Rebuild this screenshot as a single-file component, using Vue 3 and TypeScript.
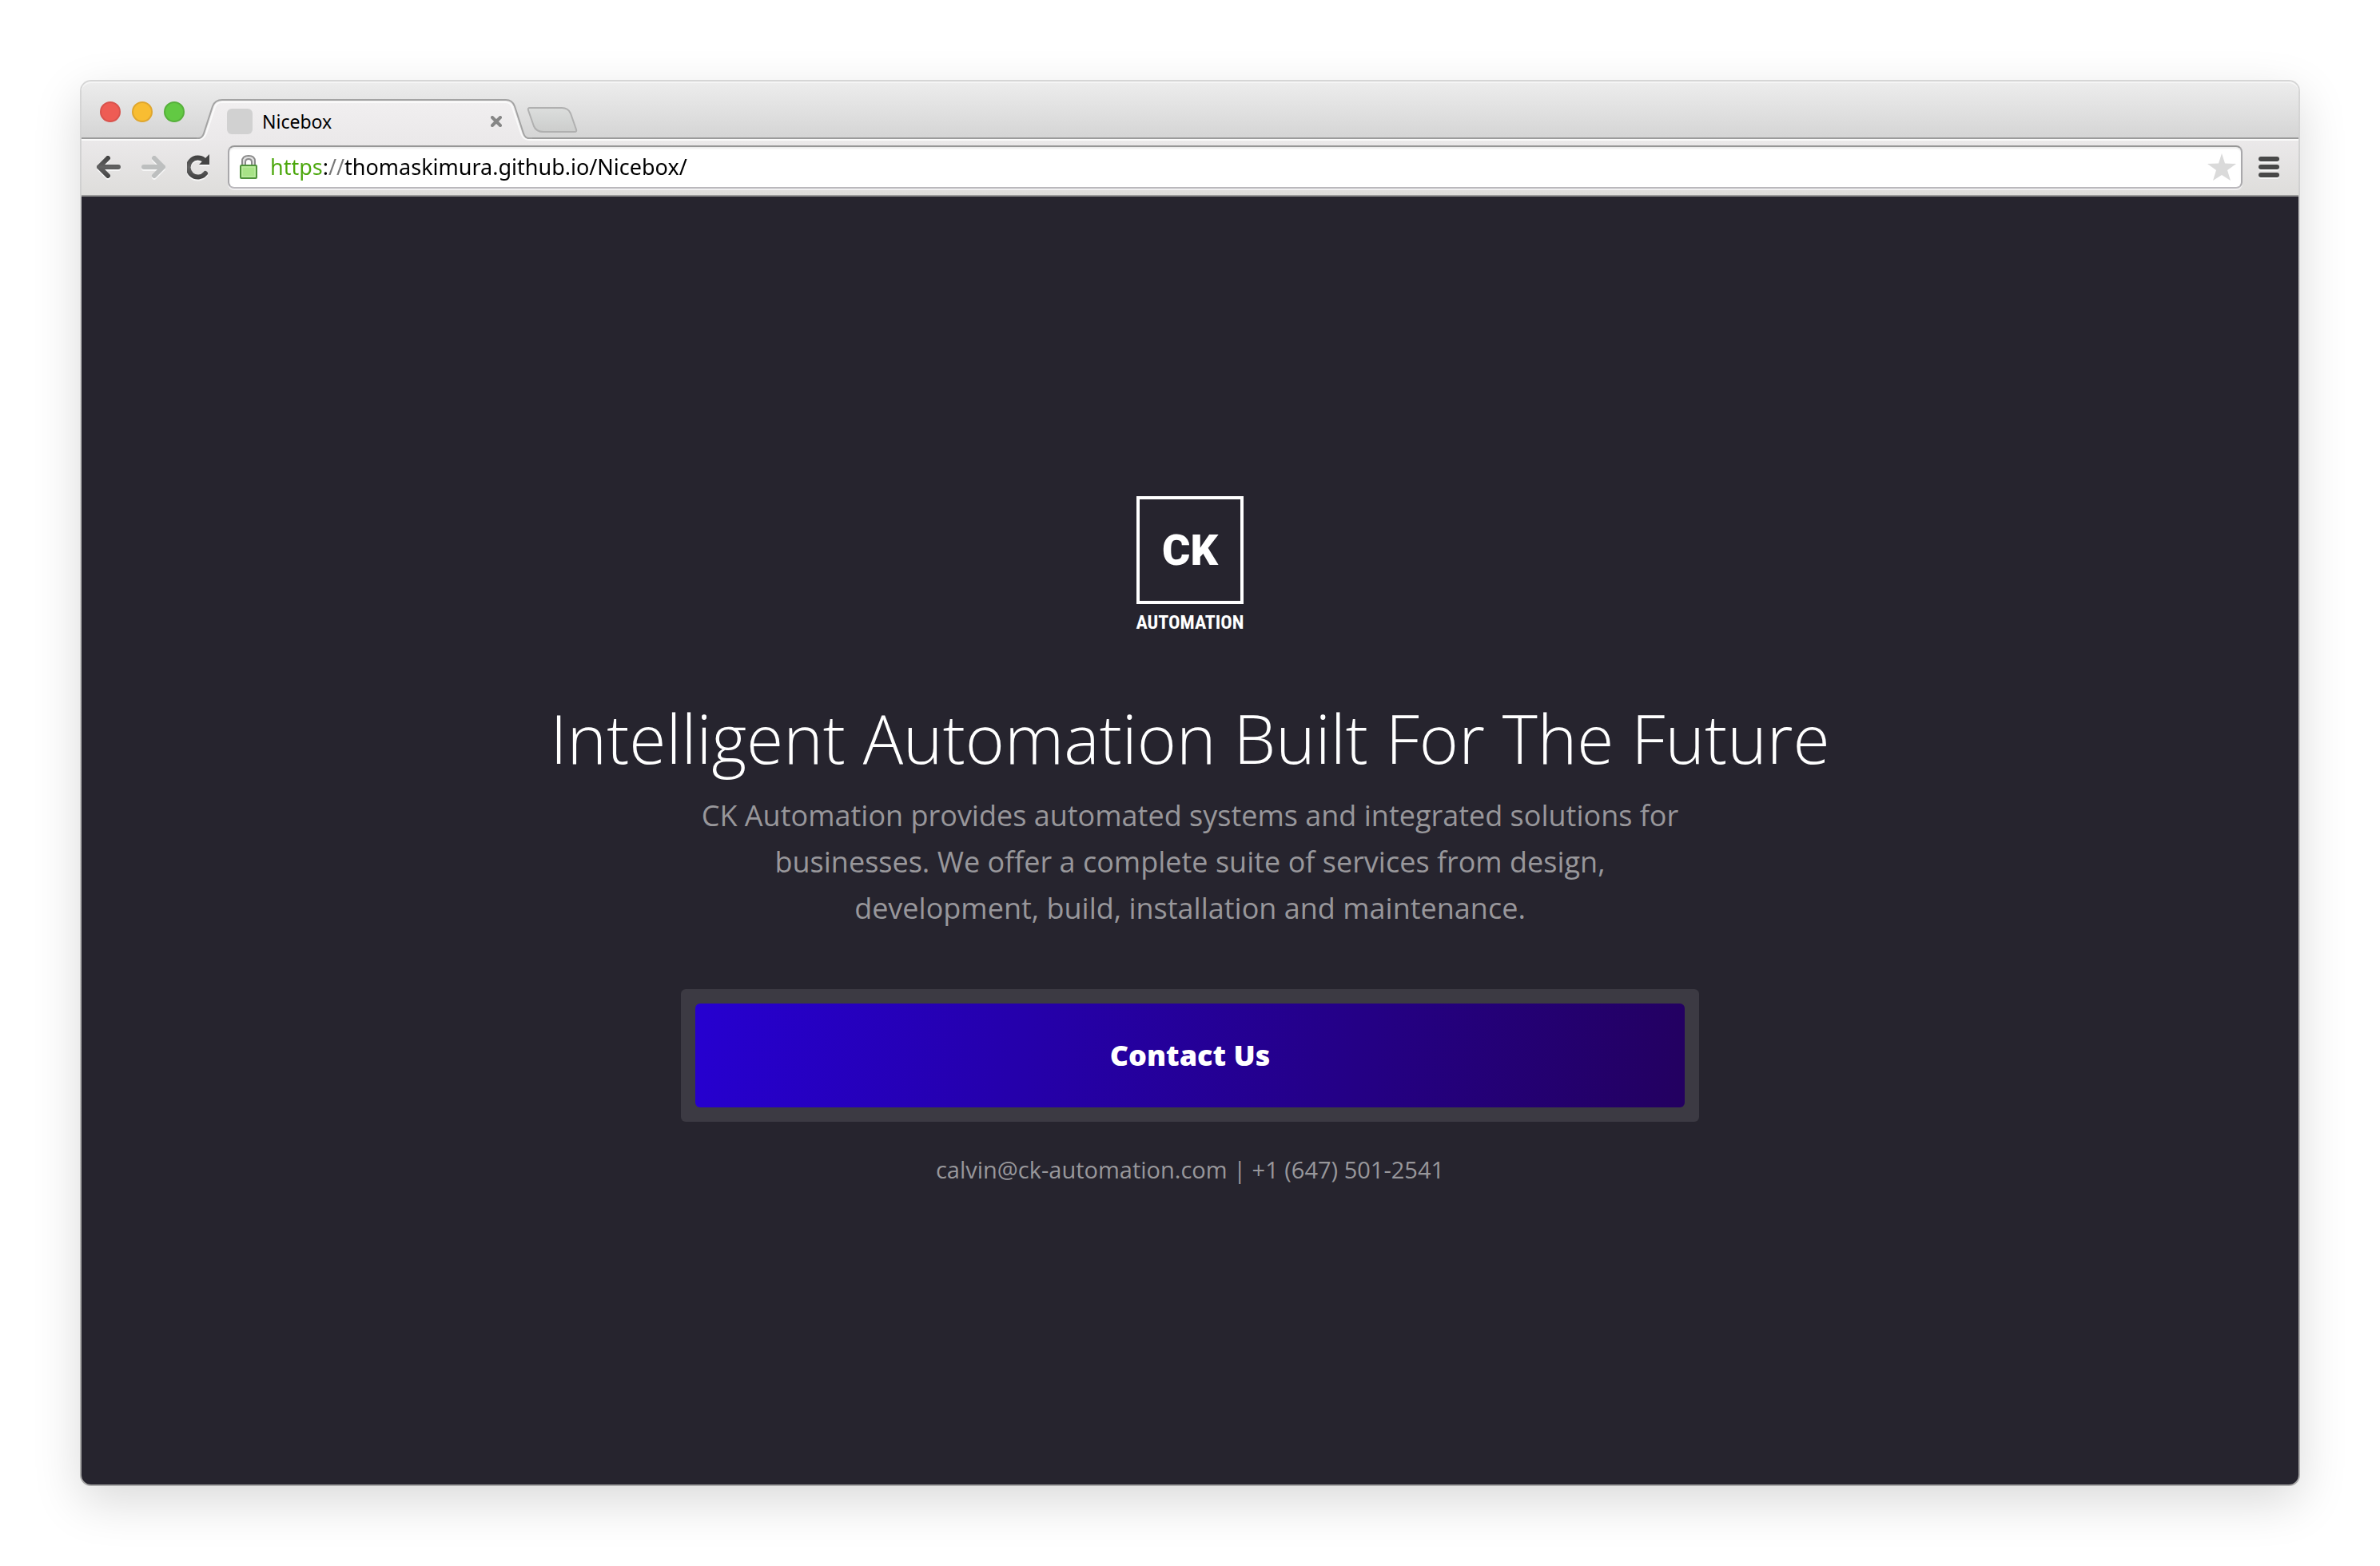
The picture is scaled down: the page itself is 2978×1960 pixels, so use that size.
<script setup lang="ts">
import { ref } from 'vue'

const address = ref<string>('https://thomaskimura.github.io/Nicebox/')
const lights: string[] = ['close', 'minimise', 'zoom']
</script>

<template>
  <div class="desktop">
    <div class="window">
      <header class="tabstrip">
        <div class="lights">
          <button v-for="l in lights" :key="l" type="button" :class="['light', l]" :aria-label="l"></button>
        </div>
        <div class="tab">
          <svg class="tab-shape" viewBox="0 0 420 52" aria-hidden="true">
            <defs>
              <linearGradient id="tabFill" x1="0" y1="0" x2="0" y2="1">
                <stop offset="0" stop-color="#f1eff0" />
                <stop offset="1" stop-color="#ebe9ea" />
              </linearGradient>
            </defs>
            <path d="M0 52V50H3Q8 49 10 43L21 10Q24 2 32 2H387Q394 2 397 9L408 43Q410 50 416 50H420V52Z" fill="url(#tabFill)" />
            <path d="M0 51H3Q9 50 12 43L23 10Q25 4 32 4H386Q393 4 395 10L406 43Q409 51 416 51H420" fill="none" stroke="#fafafa" stroke-width="2" />
            <path d="M0 49H2Q7 49 9 43L20 9Q23 1 32 1H387Q395 1 398 9L409 43Q411 49 416 49H420" fill="none" stroke="#a3a3a3" stroke-width="2" />
          </svg>
          <span class="favicon"></span>
          <span class="tab-title">Nicebox</span>
          <button class="tab-close" type="button" aria-label="Close tab">
            <svg width="14" height="14" viewBox="0 0 14 14"><path d="M2 2L12 12M12 2L2 12" stroke="#868686" stroke-width="4" stroke-linecap="round" /></svg>
          </button>
        </div>
        <button class="new-tab" type="button" aria-label="New tab">
          <svg width="66" height="36" viewBox="0 0 66 36">
            <defs>
              <linearGradient id="newFill" x1="0" y1="0" x2="0" y2="1">
                <stop offset="0" stop-color="#dcdedd" />
                <stop offset="1" stop-color="#cccdcc" />
              </linearGradient>
            </defs>
            <path d="M5 1H45Q53 1 56 8L63 28Q64 31 61 31H22Q13 31 10 24L3 4Q2 1 5 1Z" fill="url(#newFill)" stroke="#b0b0b0" stroke-width="2" />
          </svg>
        </button>
      </header>

      <nav class="toolbar" aria-label="Browser">
        <svg class="defs" width="0" height="0" aria-hidden="true">
          <defs>
            <linearGradient id="ink" x1="0" y1="0" x2="0" y2="32" gradientUnits="userSpaceOnUse">
              <stop offset="0" stop-color="#3a3a3a" />
              <stop offset="0.5" stop-color="#626262" />
              <stop offset="1" stop-color="#3e3e3e" />
            </linearGradient>
          </defs>
        </svg>
        <div class="nav-buttons">
          <button type="button" aria-label="Back">
            <svg width="34" height="32" viewBox="0 0 34 32"><path d="M17 5L6 16L17 27M6 16H30" fill="none" stroke="url(#ink)" stroke-width="6" stroke-linecap="round" stroke-linejoin="round" /></svg>
          </button>
          <button type="button" aria-label="Forward">
            <svg width="34" height="32" viewBox="0 0 34 32"><path d="M17 5L28 16L17 27M28 16H4" fill="none" stroke="#bdbfbf" stroke-width="6" stroke-linecap="round" stroke-linejoin="round" /></svg>
          </button>
          <button type="button" aria-label="Reload">
            <svg width="34" height="32" viewBox="0 0 34 32"><path d="M23 24A12 12 0 1 1 22 8" fill="none" stroke="url(#ink)" stroke-width="6" stroke-linecap="round" /><path d="M28 0V13H15Z" fill="#444" /></svg>
          </button>
        </div>
        <div class="omnibox">
          <svg class="lock" width="24" height="32" viewBox="0 0 24 32" aria-hidden="true">
            <path d="M4 14V9Q4 2 12 2Q20 2 20 9V14" fill="none" stroke="#8a8a8a" stroke-width="2" />
            <path d="M6 14V9Q6 4 12 4Q18 4 18 9V14" fill="none" stroke="#dedede" stroke-width="2" />
            <path d="M8 14V10Q8 6 12 6Q16 6 16 10V14" fill="none" stroke="#8a8a8a" stroke-width="2" />
            <rect x="2" y="14" width="20" height="16" rx="1" fill="#a8e387" stroke="#4f933b" stroke-width="2" />
            <rect x="4" y="16" width="16" height="12" fill="none" stroke="#c3efaa" stroke-width="1" />
          </svg>
          <input v-model="address" class="url" type="text" aria-label="Address" spellcheck="false" />
          <button class="star" type="button" aria-label="Bookmark">
            <svg width="36" height="34" viewBox="0 0 36 34"><path d="M18 0L22 12.500L36 13L25 21L29 34L18 27L7 34L11 21L0 13L14 12.500Z" fill="#dadada" /></svg>
          </button>
        </div>
        <button class="menu" type="button" aria-label="Menu"><span></span><span></span><span></span></button>
      </nav>

      <main class="page">
        <div class="logo">
          <div class="logo-box">CK</div>
          <div class="logo-name">AUTOMATION</div>
        </div>
        <h1>Intelligent Automation Built For The Future</h1>
        <p class="lead">CK Automation provides automated systems and integrated solutions for businesses. We offer a complete suite of services from design, development, build, installation and maintenance.</p>
        <div class="cta"><button type="button">Contact Us</button></div>
        <p class="contact">calvin@ck-automation.com | +1 (647) 501-2541</p>
      </main>
    </div>
  </div>
</template>

<style>
body {
  background: #fff;
}
</style>

<style scoped>
* {
  box-sizing: border-box;
}
button {
  margin: 0;
  padding: 0;
  border: 0;
  background: none;
  font: inherit;
  cursor: pointer;
}
svg {
  display: block;
}
.desktop {
  display: flex;
  min-height: 100vh;
  padding: 100px;
  font-family: "Open Sans", "Noto Sans", sans-serif;
}
.window {
  flex: 1;
  display: flex;
  flex-direction: column;
  padding: 2px;
  border-radius: 14px;
  background: linear-gradient(#d6d6d6, #d0d0d0 146px, #a9a9a9);
  box-shadow: 0 20px 60px rgba(0, 0, 0, 0.15);
}
.tabstrip {
  display: flex;
  align-items: flex-start;
  height: 72px;
  padding-left: 23px;
  border-bottom: 2px solid #9b9b9b;
  border-radius: 12px 12px 0 0;
  background: linear-gradient(#ededed, #d5d5d5);
  box-shadow: inset 0 2px #f5f5f5;
}
.lights {
  display: flex;
  gap: 14px;
  margin-top: 25px;
}
.light {
  width: 26px;
  height: 26px;
  border-radius: 50%;
}
.close {
  background: #ee5c54;
  border: 2px solid #d9534d;
}
.minimise {
  background: #f8bd32;
  border: 2px solid #dfa62e;
}
.zoom {
  background: #62c943;
  border: 2px solid #56b03b;
}
.tab {
  position: relative;
  z-index: 1;
  display: flex;
  align-items: center;
  width: 420px;
  height: 52px;
  margin-top: 22px;
  margin-left: 15px;
  padding: 4px 38px 0;
}
.tab-shape {
  position: absolute;
  inset: 0;
  width: 100%;
  height: 100%;
}
.favicon,
.tab-title,
.tab-close {
  position: relative;
}
.favicon {
  width: 32px;
  height: 32px;
  border-radius: 6px;
  background: #d1d1d1;
}
.tab-title {
  flex: 1;
  margin-left: 12px;
  font-family: "Noto Sans", sans-serif;
  font-size: 23px;
  line-height: 32px;
  color: #000;
}
.new-tab {
  margin-top: 32px;
  margin-left: -8px;
}
.toolbar {
  display: flex;
  align-items: center;
  height: 72px;
  padding: 0 24px 0 16px;
  border-bottom: 2px solid #999;
  background: linear-gradient(#ebe9ea, #dedddb);
  box-shadow: inset 0 2px #fafafa;
}
.defs {
  position: absolute;
}
.nav-buttons {
  display: flex;
  gap: 24px;
  width: 167px;
}
.nav-buttons svg {
  filter: drop-shadow(0 2px 0 #f6f6f6);
}
.omnibox {
  flex: 1;
  display: flex;
  align-items: center;
  height: 54px;
  padding: 0 6px 0 12px;
  border: 2px solid #a9a8ab;
  border-top-color: #969696;
  border-bottom-color: #bab8bc;
  border-radius: 8px;
  background: #fff;
  box-shadow: inset 0 2px 2px #ececec, 0 2px #f1f0f1;
}
.url {
  flex: 1;
  min-width: 0;
  height: 40px;
  margin-left: 15px;
  padding: 0;
  border: 0;
  outline: 0;
  font-family: "Noto Sans", sans-serif;
  font-size: 27px;
  line-height: 40px;
  color: transparent;
  caret-color: #000;
  background: linear-gradient(90deg, #4ba70c 66px, #000 66px, #000 73px, #777 73px, #777 93px, #000 93px);
  background-clip: text;
  -webkit-background-clip: text;
}
.menu {
  display: flex;
  flex-direction: column;
  gap: 4px;
  width: 26px;
  margin-left: 20px;
}
.menu span {
  height: 6px;
  border-radius: 3px;
  background: #484848;
  box-shadow: 0 2px #f4f4f4;
}
.page {
  flex: 1;
  display: flex;
  flex-direction: column;
  align-items: center;
  justify-content: center;
  padding: 40px;
  border-radius: 0 0 12px 12px;
  background: #26242e;
  text-align: center;
}
.logo {
  width: 134px;
  color: #fff;
}
.logo-box {
  height: 135px;
  border: 4px solid #fff;
  font-family: Roboto, sans-serif;
  font-size: 54px;
  font-weight: 900;
  line-height: 128px;
}
.logo-name {
  display: flex;
  justify-content: center;
  margin-top: 7px;
  font-family: "Roboto Condensed", "Liberation Sans Narrow", sans-serif;
  font-size: 24px;
  font-weight: 700;
  line-height: 32px;
}
h1 {
  margin: 71px 0 10px;
  font-size: 84px;
  font-weight: 300;
  line-height: 116px;
  color: #fff;
}
.lead {
  max-width: 1274px;
  margin: 0;
  font-size: 36px;
  line-height: 58px;
  color: #98979b;
}
.cta {
  width: 100%;
  max-width: 1274px;
  margin-top: 72px;
  padding: 18px;
  border-radius: 6px;
  background: #3c3a43;
}
.cta button {
  display: block;
  width: 100%;
  height: 130px;
  border-radius: 6px;
  background: linear-gradient(100deg, #2600d0, #230060);
  font-size: 36px;
  font-weight: 800;
  color: #fff;
}
.contact {
  margin: 40px 0 0;
  font-size: 29px;
  line-height: 40px;
  color: #98979b;
}
</style>
